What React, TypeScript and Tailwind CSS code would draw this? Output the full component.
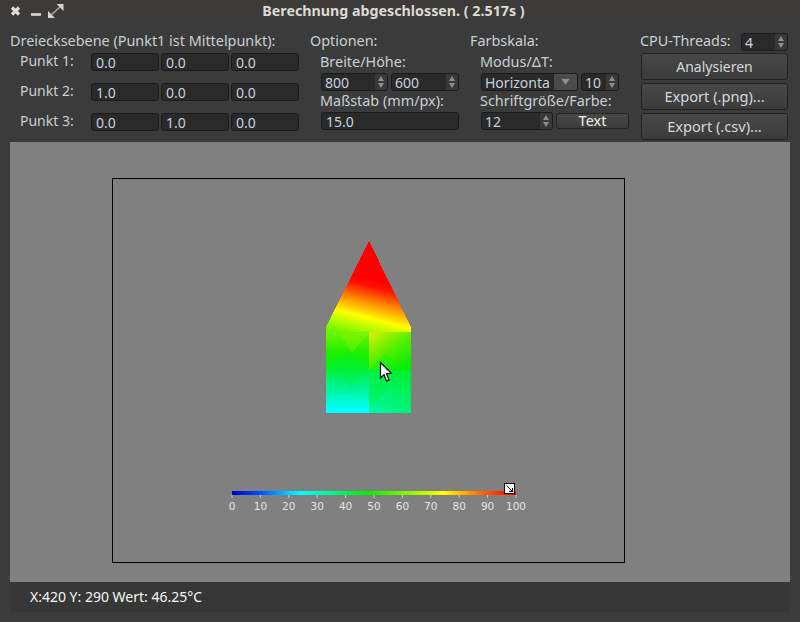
import { ReactNode } from "react";

function Field({ value, className = "" }: { value: string; className?: string }) {
  return (
    <div className={`h-[18px] rounded-[3px] border border-[#1c1c1c] bg-[#2a2a2a] pl-[4px] text-[14px] leading-[18px] text-[#c8d2dc] ${className}`}>
      {value}
    </div>
  );
}

function Spin({ value, className = "" }: { value: string; className?: string }) {
  return (
    <div className={`relative h-[18px] overflow-hidden rounded-[3px] border border-[#1c1c1c] bg-[#2a2a2a] pl-[3px] text-[14px] leading-[18px] text-[#c8d2dc] ${className}`}>
      {value}
      <span className="absolute right-0 top-0 flex h-full w-[12px] items-center justify-center bg-[#393939]">
        <svg width="8" height="14" viewBox="0 0 8 14">
          <path d="M4 1 L7 6 H1 Z" fill="#8e8e8e" />
          <path d="M4 13 L7 8 H1 Z" fill="#8e8e8e" />
        </svg>
      </span>
    </div>
  );
}

function Btn({ children, className = "" }: { children: ReactNode; className?: string }) {
  return (
    <div className={`flex items-center justify-center rounded-[3px] border border-[#222222] bg-gradient-to-b from-[#484848] to-[#3b3b3b] text-[#d4d8dc] ${className}`}>
      {children}
    </div>
  );
}

function PointRow({ label, values }: { label: string; values: string[] }) {
  return (
    <div className="flex h-[18px] items-center">
      <span className="-mt-[3px] w-[81px] pl-[10px] text-[14px] leading-[18px]">{label}</span>
      <div className="flex gap-[2px]">
        {values.map((v, i) => (
          <Field key={i} value={v} className="w-[68px]" />
        ))}
      </div>
    </div>
  );
}

const ticks = [0, 10, 20, 30, 40, 50, 60, 70, 80, 90, 100];

// the simulated surface and colour bar, viewBox uses page coordinates
function Plot() {
  return (
    <svg width="511" height="383" viewBox="113 179 511 383" className="block">
      <defs>
        <linearGradient id="heat" gradientUnits="userSpaceOnUse" x1="378" y1="280" x2="359" y2="356">
          <stop offset="0" stopColor="#ff0000" />
          <stop offset="0.1" stopColor="#ff1000" />
          <stop offset="0.28" stopColor="#ff8000" />
          <stop offset="0.5" stopColor="#ffff00" />
          <stop offset="0.72" stopColor="#80f800" />
          <stop offset="1" stopColor="#00f000" />
        </linearGradient>
        <linearGradient id="upperLeft" gradientUnits="userSpaceOnUse" x1="345" y1="332" x2="345" y2="372">
          <stop offset="0" stopColor="#70f400" />
          <stop offset="0.55" stopColor="#18f000" />
          <stop offset="1" stopColor="#00f030" />
        </linearGradient>
        <linearGradient id="upperRight" gradientUnits="userSpaceOnUse" x1="372" y1="332" x2="400" y2="372">
          <stop offset="0" stopColor="#d8f000" />
          <stop offset="0.5" stopColor="#58f000" />
          <stop offset="1" stopColor="#00ee00" />
        </linearGradient>
        <linearGradient id="lowerLeft" gradientUnits="userSpaceOnUse" x1="348" y1="370" x2="348" y2="410">
          <stop offset="0" stopColor="#00f040" />
          <stop offset="0.6" stopColor="#00f6b0" />
          <stop offset="1" stopColor="#00ffff" />
        </linearGradient>
        <linearGradient id="lowerRight" gradientUnits="userSpaceOnUse" x1="402" y1="368" x2="372" y2="414">
          <stop offset="0" stopColor="#00ee30" />
          <stop offset="1" stopColor="#00f8a8" />
        </linearGradient>
        <linearGradient id="jet" gradientUnits="userSpaceOnUse" x1="232" y1="0" x2="516" y2="0">
          <stop offset="0" stopColor="#0000c8" />
          <stop offset="0.1" stopColor="#0050ff" />
          <stop offset="0.24" stopColor="#00ffff" />
          <stop offset="0.48" stopColor="#00f000" />
          <stop offset="0.745" stopColor="#ffff00" />
          <stop offset="0.9" stopColor="#ff5000" />
          <stop offset="1" stopColor="#ff0000" />
        </linearGradient>
      </defs>
      <g shapeRendering="crispEdges">
        <polygon points="369,241 326,327 326,413 411,413 411,327" fill="url(#heat)" />
        <rect x="326" y="332" width="43" height="38" fill="url(#upperLeft)" />
        <rect x="369" y="332" width="42" height="38" fill="url(#upperRight)" />
        <rect x="326" y="370" width="43" height="43" fill="url(#lowerLeft)" />
        <rect x="369" y="370" width="42" height="43" fill="url(#lowerRight)" />
      </g>
      {/* facets of the mesh */}
      <polygon points="340,333 352,353 369,333" fill="#a8f400" opacity="0.3" />
      <polygon points="332,363 350,388 369,370 352,353" fill="#00f040" opacity="0.3" />
      <polygon points="385,353 403,370 372,407 369,402 369,370" fill="#00ee20" opacity="0.3" />
      <rect x="232" y="491" width="284" height="4" fill="url(#jet)" />
      {ticks.map((t, i) => (
        <g key={t}>
          <line x1={232 + i * 28.4} x2={232 + i * 28.4} y1="495" y2="498" stroke="#c8c8c8" strokeWidth="1" />
          <text x={232 + i * 28.4} y="510" textAnchor="middle" fontSize="10.5" fill="#e4e4e4" fontFamily="'DejaVu Sans', sans-serif">
            {t}
          </text>
        </g>
      ))}
      <rect x="504.5" y="483.5" width="10" height="10" fill="#ffffff" stroke="#000000" />
      <path d="M506.5 485.5 L512.5 491.5 M512.5 488 V491.5 H509" stroke="#000000" fill="none" />
      <path d="M380.5 362.5 V378 L384 374.5 L386.5 381 L389 380 L386.5 373.5 L391.5 373.5 Z" fill="#ffffff" stroke="#000000" strokeWidth="1.2" />
    </svg>
  );
}

export default function App() {
  return (
    <div className="flex h-[622px] w-[800px] flex-col overflow-hidden bg-[#3b3b3b] font-['Noto_Sans',sans-serif] text-[14.4px] text-[#c9cfd4]">
      {/* Title bar */}
      <div className="relative flex h-[22px] items-center justify-center bg-[#3c3b39] pr-[13px]">
        <svg className="absolute left-0 top-0" width="72" height="22" viewBox="0 0 72 22">
          <path d="M12 7.5 L19 14.5 M19 7.5 L12 14.5" stroke="#dcdcdc" strokeWidth="3.2" />
          <path d="M31 14.5 H41" stroke="#d8d8d8" strokeWidth="2.6" />
          <path d="M48 18 V11 L55 18 Z M63.5 4 V11 L56.5 4 Z" fill="#d4d4d4" />
          <path d="M51 15 L60 7" stroke="#a8a8a8" strokeWidth="1.6" />
        </svg>
        <span className="text-[14.25px] font-bold text-[#dcdad5]">Berechnung abgeschlossen. ( 2.517s )</span>
      </div>

      {/* Options */}
      <div className="flex h-[120px] pl-[10px]">
        <div className="w-[300px]">
          <div className="h-[31px] pt-[9px] leading-[19px]">Dreiecksebene (Punkt1 ist Mittelpunkt):</div>
          <div className="flex flex-col gap-[12px]">
            <PointRow label="Punkt 1:" values={["0.0", "0.0", "0.0"]} />
            <PointRow label="Punkt 2:" values={["1.0", "0.0", "0.0"]} />
            <PointRow label="Punkt 3:" values={["0.0", "1.0", "0.0"]} />
          </div>
        </div>

        <div className="w-[160px]">
          <div className="h-[31px] pt-[9px] leading-[19px]">Optionen:</div>
          <div className="pl-[10px]">
            <div className="-mt-[1px] h-[20px] leading-[19px]">Breite/Höhe:</div>
            <div className="mt-[1px] flex gap-[3px] pl-[1px]">
              <Spin value="800" className="w-[67px]" />
              <Spin value="600" className="w-[68px]" />
            </div>
            <div className="h-[21px] leading-[19px]">Maßstab (mm/px):</div>
            <Field value="15.0" className="ml-[1px] w-[138px]" />
          </div>
        </div>

        <div className="w-[170px]">
          <div className="h-[31px] pt-[9px] leading-[19px]">Farbskala:</div>
          <div className="pl-[10px]">
            <div className="-mt-[1px] h-[20px] leading-[19px]">Modus/ΔT:</div>
            <div className="mt-[1px] flex gap-[3px] pl-[1px]">
              <div className="flex h-[18px] w-[97px] overflow-hidden rounded-[3px] border border-[#1c1c1c] bg-[#2a2a2a]">
                <span className="w-[72px] pl-[3px] text-[14px] leading-[18px] text-[#c8d2dc]">Horizonta</span>
                <span className="flex flex-1 items-center justify-center bg-[#4b4b4b]">
                  <svg width="9" height="8" viewBox="0 0 9 8"><path d="M0.5 1 H8.5 L4.5 7 Z" fill="#8f8f8f" /></svg>
                </span>
              </div>
              <Spin value="10" className="w-[38px]" />
            </div>
            <div className="h-[21px] leading-[19px]">Schriftgröße/Farbe:</div>
            <div className="flex gap-[3px] pl-[1px]">
              <Spin value="12" className="w-[72px]" />
              <Btn className="mt-[1px] h-[16px] w-[73px] text-[14.5px] text-[#f0f0f0]">Text</Btn>
            </div>
          </div>
        </div>

        <div className="w-[150px]">
          <div className="flex h-[31px] items-start pt-[9px] leading-[19px]">
            <span className="w-[101px]">CPU-Threads:</span>
            <Spin value="4" className="mt-[2px] w-[47px]" />
          </div>
          <div className="flex flex-col gap-[3px] pl-[1px]">
            <Btn className="h-[27px] w-[147px] text-[14px]">Analysieren</Btn>
            <Btn className="h-[27px] w-[147px] text-[14.6px]">Export (.png)...</Btn>
            <Btn className="h-[27px] w-[147px] text-[14.6px]">Export (.csv)...</Btn>
          </div>
        </div>
      </div>

      {/* Canvas */}
      <div className="mx-[10px] h-[440px] bg-[#808080] pl-[102px] pt-[36px]">
        <div className="w-[513px] border border-black">
          <Plot />
        </div>
      </div>

      {/* Status */}
      <div className="mx-[10px] h-[30px] bg-[#373737] pl-[20px] pt-[5px] text-[14px] leading-[19px] text-[#f6f6f6]">X:420 Y: 290 Wert: 46.25°C</div>
    </div>
  );
}
